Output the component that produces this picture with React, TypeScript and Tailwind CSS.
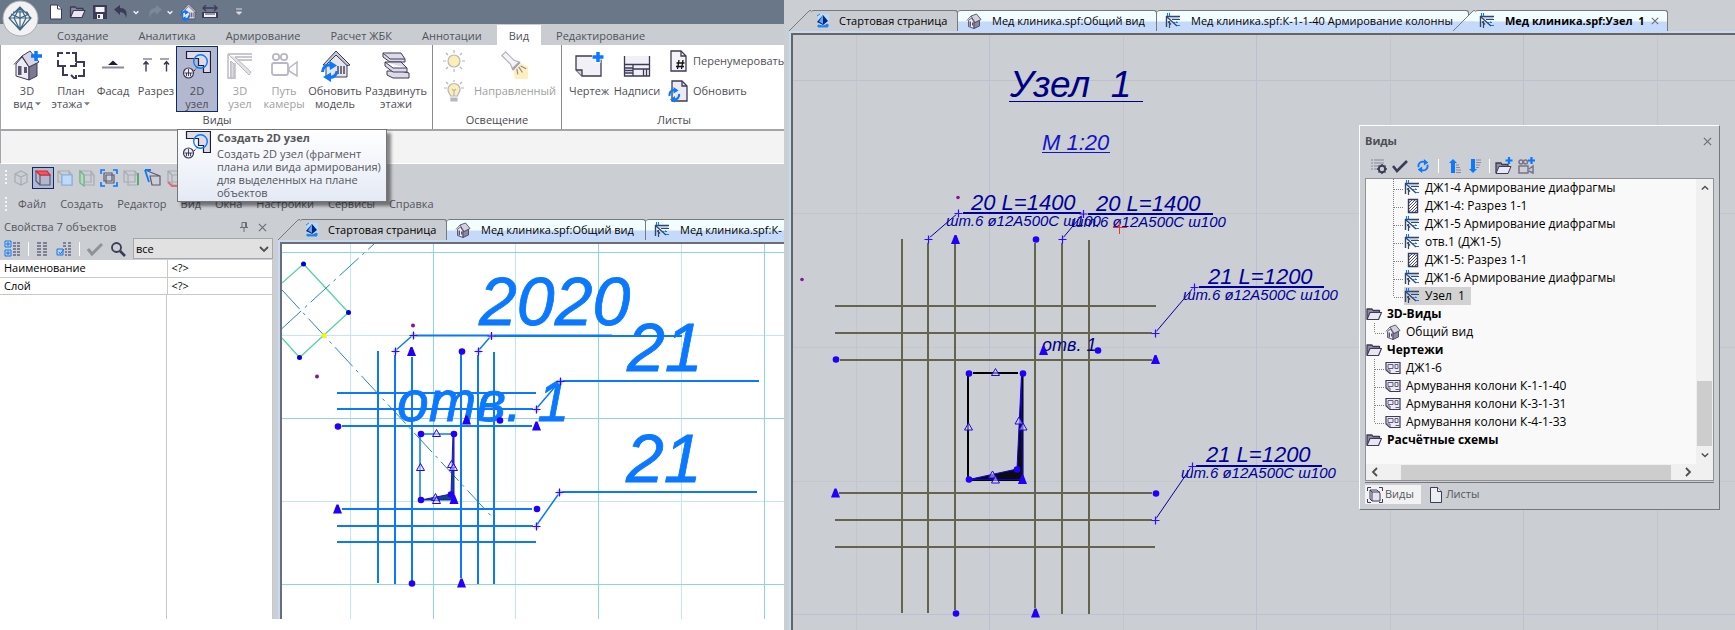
import React from "react";

type IconProps = { className?: string };

const INK = "#3d3a57";
const BLUE = "#0a78ff";

/* ---------- shared glyphs ---------- */

const CloseGlyph: React.FC<IconProps> = ({ className }) => (
  <svg viewBox="0 0 10 10" className={className} stroke="#6b6e73" strokeWidth="1.3" fill="none">
    <path d="M1 1l8 8M9 1l-8 8" />
  </svg>
);

const Chevron: React.FC<{ d: string; className?: string; stroke?: string }> = ({ d, className, stroke = "#505050" }) => (
  <svg viewBox="0 0 10 10" className={className} stroke={stroke} strokeWidth="1.8" fill="none">
    <path d={d} />
  </svg>
);

const House: React.FC<IconProps> = ({ className }) => (
  <svg viewBox="0 0 16 16" className={className} stroke={INK} strokeWidth="0.8" strokeLinejoin="round">
    <path d="M2.5 7.5v6L8 15.500V9L5.500 5z" fill="#efedf4" />
    <path d="M8 9.500l5.500-2.500v6L8 15.500z" fill="#8c889e" />
    <path d="M1 7.500L5 3l4 6.500L15 6.500 10.500 1 5 3" fill="#d4d1de" />
    <path d="M3.500 8.500h1.500v5H3.500zM6 9.500h1.300v3H6z" fill="#5a5672" stroke="none" />
  </svg>
);

const StartIcon: React.FC<IconProps> = ({ className }) => (
  <svg viewBox="0 0 16 16" className={className}>
    <path d="M3 1h11v14H3z" fill="#b9dcf8" />
    <path d="M8 2l5 6-5 4-6-3z" fill="#07248c" />
    <path d="M8 2v9L4 8.5z" fill="#5fa8f2" />
    <path d="M2 3l3-2M3 12l5 1 5-2v3H3z" fill="#2b7fe0" stroke="#2b7fe0" />
  </svg>
);

const RebarIcon: React.FC<IconProps> = ({ className }) => (
  <svg viewBox="0 0 16 16" className={className} fill="none" stroke="#33476b">
    <path d="M1 3.500h14M1.500 3v11" strokeWidth="1.400" />
    <path d="M7 6.500h8M4.500 8v7" strokeWidth="1.200" />
    <path d="M2 4l10 9M3 8.500l3 3" strokeWidth="1.300" />
    <path d="M2.500 0v3M4.500 0v3M9 9.500h4M12 12.500h3" stroke={BLUE} strokeWidth="1.100" />
    <path d="M5 5h9M10 10l2-2" stroke="#8aa6d0" />
  </svg>
);

const SectionIcon: React.FC<IconProps> = ({ className }) => (
  <svg viewBox="0 0 16 16" className={className} fill="none" stroke={INK}>
    <path d="M4.5 1.5h9v13h-9z" fill="#fff" strokeWidth="1.4" />
    <path d="M5 5l3-3M5 8l6-6M5 11l8-8M5 14l8-8M8 14l5-5M11 14l2-2" strokeWidth="0.9" />
    <path d="M6 3v1M12 3v1M6 12v1M12 12v1" stroke={BLUE} />
  </svg>
);

const FolderIcon: React.FC<IconProps> = ({ className }) => (
  <svg viewBox="0 0 16 16" className={className} stroke={INK} strokeLinejoin="round">
    <path d="M1 13V3h5l1 1.5h6.5V7" fill="#8d8a9d" strokeWidth="1.3" />
    <path d="M1 13.5L4 6.5h11.5L12.5 13.5z" fill="#e9e7f0" strokeWidth="1.1" />
  </svg>
);

const SheetIcon: React.FC<IconProps> = ({ className }) => (
  <svg viewBox="0 0 16 16" className={className} stroke={INK} fill="none">
    <path d="M1 2.5h14v11H5L1 10z" fill="#eceaf2" strokeWidth="1.2" />
    <path d="M1 10h4v3.5M3 4.5h5v4H3zM10 4.500h3v4h-3zM10.500 11.500h4" strokeWidth="1" stroke="#615e7a" />
  </svg>
);

const RefreshGlyph: React.FC<IconProps> = ({ className }) => (
  <svg viewBox="0 0 16 16" className={className} fill="none" stroke={BLUE} strokeWidth="2">
    <path d="M3 9.500A5 5 0 0 1 10 3.500M13 6.500A5 5 0 0 1 6 12.500" />
    <path d="M9 0l5 4-5 3.500zM7 16l-5-4 5-3.500z" fill={BLUE} stroke="none" />
  </svg>
);

/* ---------- ribbon icons, 28x28 ---------- */

const House3D = () => (
  <svg viewBox="0 0 28 28" className="h-7 w-7 overflow-visible" stroke={INK} strokeLinejoin="round">
    <path d="M3 13v12l13 4V16L9 6z" fill="#eceaf2" />
    <path d="M16 16l8-4v13l-8 4z" fill="#7d798f" />
    <path d="M1 13.500L9 5l7 11 10-5L17 0 9 5" fill="#d9d6e2" />
    <path d="M5 15h3.500v9H5zM11 16h3v6h-3z" fill="#5a5672" stroke="none" />
    <path d="M23 0v10M18 5h11" stroke={BLUE} strokeWidth="3.500" />
  </svg>
);

const FloorPlan = () => (
  <svg viewBox="0 0 28 28" className="h-7 w-7" fill="none" stroke={INK} strokeWidth="2">
    <path d="M1 6V2h5M9 2h4M15 2h4v9M1 9v6h8M6 15v9h5M19 11h8v5M27 18v7h-6M13 15h6v-3M14 24l3 3h2v-3" />
  </svg>
);

const Facade = () => (
  <svg viewBox="0 0 28 28" className="h-7 w-7">
    <path d="M3 16.500h22" stroke="#8b889b" strokeWidth="2" />
    <path d="M14 9.500l5 4.500H9z" fill="#1f1d33" />
  </svg>
);

const Section = () => (
  <svg viewBox="0 0 28 28" className="h-7 w-7" fill="none" stroke={INK}>
    <path d="M1 8h9M18 8h9" stroke="#8b889b" strokeWidth="1.500" />
    <path d="M4 10.500v10M24.500 10.500v10M1.500 13.500L4 10.500l2.500 3M22 13.500l2.500-3 2.500 3" strokeWidth="1.400" />
  </svg>
);

const Node2D = () => (
  <svg viewBox="0 0 28 28" className="h-7 w-7 shrink-0" fill="none" stroke="#1f1d33" strokeWidth="1.200">
    <path d="M3.500 0.500h24v21h-7v-7h-5v-7h-12z" fill="#dedceb" />
    <circle cx="17.500" cy="10.500" r="6.800" stroke={BLUE} strokeWidth="1.400" />
    <circle cx="5.500" cy="22" r="5" fill="#f0eff6" stroke={INK} />
    <path d="M1.500 22h8M5.500 18v4M3.500 22v3M5.500 22v3M7.500 22v3" strokeWidth="0.800" />
    <path d="M11 20l3-3.500" strokeDasharray="2 1.500" strokeWidth="1" />
  </svg>
);

const Node3D = () => (
  <svg viewBox="0 0 28 28" className="h-7 w-7" fill="none" stroke="#b9b7c0">
    <path d="M2 3h24M2 3v24h3V10M5 27h4V12M9 6h17M12 9h14" strokeWidth="1.400" />
    <path d="M3 4l20 20 2-3L9 6" fill="#e2e1e6" />
    <path d="M5 10l3 3v14H5z" fill="#dddce2" />
  </svg>
);

const Camera = () => (
  <svg viewBox="0 0 28 28" className="h-7 w-7" fill="none" stroke="#b9b7c6" strokeWidth="1.800">
    <circle cx="6" cy="6" r="3.200" />
    <circle cx="14" cy="6" r="3.200" />
    <rect x="2" y="12" width="16" height="12" rx="2" />
    <path d="M19 17l8-6v14l-8-5z" strokeWidth="1.500" />
  </svg>
);

const HouseRefresh: React.FC<IconProps> = ({ className }) => (
  <svg viewBox="0 0 28 28" className={className} stroke={INK} strokeLinejoin="round">
    <path d="M5 13v13h21V13L15 2z" fill="#e6e4ec" />
    <path d="M2 14L15 0l14 14-3 .5L15 4 5 14z" fill="#c9c6d4" />
    <path d="M17 15v8M20 15v8M23 15v8" stroke="#726e87" strokeWidth="2" />
    <path d="M1.500 21a7 7 0 0 1 8-7M16 20a7 7 0 0 1-7 6.500" fill="none" stroke={BLUE} strokeWidth="3" />
    <path d="M8 9.500l8 5-7 4.500zM10 31l-8-5 8-4.500z" fill={BLUE} stroke="none" />
  </svg>
);

const Floors = () => (
  <svg viewBox="0 0 28 28" className="h-7 w-7" stroke={INK} fill="#dedbe8" strokeLinejoin="round">
    <path d="M5 20h14l8 2v5H11l-6-3z" />
    <path d="M1 2h18l4 6v3H8L1 6z" />
    <path d="M1 2l7 6h15M3 11h16l6 6v4H11l-8-6zM3 11l8 6h14" />
  </svg>
);

const Sun = () => (
  <svg viewBox="0 0 22 22" className="h-[22px] w-[22px]" stroke="#b7b5c0" strokeWidth="1.200">
    <circle cx="11" cy="11" r="6" fill="#fcefb4" />
    <path d="M11 0v3M11 19v3M0 11h3M19 11h3M3 3l2 2M17 17l2 2M19 3l-2 2M3 19l2-2" />
  </svg>
);

const Bulb = () => (
  <svg viewBox="0 0 22 22" className="h-[22px] w-[22px]" stroke="#b7b5c0" strokeWidth="1.200">
    <path d="M7.500 16c0-2-2.500-3-2.500-6.500a6 6 0 0 1 12 0C17 13 14.500 14 14.500 16z" fill="#fcefb4" />
    <path d="M8 18h6v3H8z" fill="#b7b5c0" />
    <path d="M9 9l2 2 2-2M11 11v5M11 0v2M1 8h3M18 8h3M3 2l2 2M19 2l-2 2" fill="none" />
  </svg>
);

const Flashlight = () => (
  <svg viewBox="0 0 30 30" className="h-7 w-7 overflow-visible">
    <path d="M13 20l9-7 7 4v13H15z" fill="#fdf0bd" />
    <path d="M1 5l4-4 9 9 6 2-7 8-3-6z" fill="#f5f4f7" stroke="#b2b0bc" strokeWidth="1.300" />
    <path d="M20 12l-8 8" stroke="#a7a5b3" strokeWidth="2.500" />
    <path d="M17 19l1 6M19 17l4 6M21 16l6 3" stroke="#8b889b" strokeWidth="1.200" />
  </svg>
);

const SheetPlus = () => (
  <svg viewBox="0 0 28 28" className="h-7 w-7 overflow-visible" stroke={INK} strokeWidth="1.300">
    <path d="M1 5h25v20H7l-6-6z" fill="#f1f0f6" />
    <path d="M1 19h6v6" fill="#d0cddb" />
    <path d="M23 0v12M17 6h12" stroke="#fff" strokeWidth="5" />
    <path d="M23 1v10M17.500 6h11" stroke={BLUE} strokeWidth="3.500" />
  </svg>
);

const Labels = () => (
  <svg viewBox="0 0 28 28" className="h-7 w-7" stroke={INK} strokeWidth="1.300">
    <path d="M1.500 5v20h25V5" fill="#f1f0f6" />
    <path d="M1.500 13.500h25M1.500 17h8M1.500 19.500h8M1.500 22h8M10 13.500V25M10 18h16.500M20.500 18v7M23.500 18v7" />
  </svg>
);

const PageHash = () => (
  <svg viewBox="0 0 20 22" className="h-[22px] w-5 shrink-0" stroke={INK} strokeWidth="1.300" fill="none">
    <path d="M3 1h10l5 5v15H3z" fill="#f4f3f8" />
    <path d="M13 1v5h5" />
    <path d="M11 10l-1.500 9M15 10l-1.500 9M8.500 13h8M8 16.500h8" stroke="#111" />
  </svg>
);

const PageRefresh = () => (
  <svg viewBox="0 0 20 22" className="h-[22px] w-5 shrink-0 overflow-visible" stroke={INK} strokeWidth="1.300" fill="none">
    <path d="M4 1h10l5 5v15H4z" fill="#eceaf2" />
    <path d="M14 1v5h5" />
    <path d="M1.500 16a5 5 0 0 1 5-6M11 14a4.500 4.500 0 0 1-5 5.500" stroke={BLUE} strokeWidth="2.200" />
    <path d="M5.500 7l5 3.500-5 3zM7 22.500l-5-3 5-3.500z" fill={BLUE} stroke="none" />
  </svg>
);

/* ---------- ribbon ---------- */

const DropArrow = () => (
  <svg viewBox="0 0 8 5" className="mb-0.5 ml-0.5 inline h-1 w-1.5">
    <path d="M0 0h8L4 4.500z" fill="#7b7b7b" />
  </svg>
);

type RibbonItem = {
  lines: string[];
  icon: React.FC;
  width: string;
  drop?: boolean;
  active?: boolean;
  disabled?: boolean;
};

const HouseRefreshLarge = () => <HouseRefresh className="h-7 w-7 overflow-visible" />;

const viewItems: RibbonItem[] = [
  { lines: ["3D", "вид"], icon: House3D, width: "w-[50px]", drop: true },
  { lines: ["План", "этажа"], icon: FloorPlan, width: "w-[38px]", drop: true },
  { lines: ["Фасад"], icon: Facade, width: "w-[46px]" },
  { lines: ["Разрез"], icon: Section, width: "w-[40px]" },
  { lines: ["2D", "узел"], icon: Node2D, width: "w-[42px]", active: true },
  { lines: ["3D", "узел"], icon: Node3D, width: "w-[44px]", disabled: true },
  { lines: ["Путь", "камеры"], icon: Camera, width: "w-[44px]", disabled: true },
  { lines: ["Обновить", "модель"], icon: HouseRefreshLarge, width: "w-[58px]" },
  { lines: ["Раздвинуть", "этажи"], icon: Floors, width: "w-[64px]" },
];

const sheetItems: RibbonItem[] = [
  { lines: ["Чертеж"], icon: SheetPlus, width: "w-[50px]" },
  { lines: ["Надписи"], icon: Labels, width: "w-[46px]" },
];

const RibbonButton: React.FC<{ item: RibbonItem }> = ({ item }) => {
  const Icon = item.icon;
  return (
    <button
      type="button"
      className={`flex h-[66px] shrink-0 flex-col items-center border pt-1 leading-[13px] whitespace-nowrap ${item.width} ${
        item.active ? "border-[#0d2a6b] bg-[#b2b8d0]" : "border-transparent"
      } ${item.disabled ? "text-[#a0a0a0]" : "text-[#4f4f55]"}`}
    >
      <Icon />
      <span className="mt-[5px]">{item.lines[0]}</span>
      {item.lines[1] && (
        <span>
          {item.lines[1]}
          {item.drop && <DropArrow />}
        </span>
      )}
    </button>
  );
};

const RibbonGroup: React.FC<{ title: string; className?: string; children: React.ReactNode }> = ({
  title,
  className,
  children,
}) => (
  <section className={`flex shrink-0 flex-col pt-px ${className ?? ""}`}>
    <div className="flex h-[66px]">{children}</div>
    <h2 className="text-center leading-4 text-[#4a4a50]">{title}</h2>
  </section>
);

const Ribbon = () => (
  <div className="flex h-[86px] overflow-hidden border-b-2 border-l border-[#a2a4a8] bg-white">
    <RibbonGroup title="Виды" className="w-[431px] pl-px">
      {viewItems.map((item) => (
        <RibbonButton key={item.lines.join(" ")} item={item} />
      ))}
    </RibbonGroup>
    <RibbonGroup title="Освещение" className="w-[129px] border-l border-[#8b8b8b]">
      <div className="flex flex-col gap-2 pt-1 pl-2.5">
        <button type="button" aria-label="Солнце"><Sun /></button>
        <button type="button" aria-label="Лампа"><Bulb /></button>
      </div>
      <button type="button" className="flex flex-1 flex-col items-center pt-[5px] pl-1 leading-[13px] text-[#a0a0a0]">
        <Flashlight />
        <span className="mt-[5px]">Направленный</span>
      </button>
    </RibbonGroup>
    <RibbonGroup title="Листы" className="flex-1 border-l border-[#8b8b8b] pl-0.5">
      {sheetItems.map((item) => (
        <RibbonButton key={item.lines[0]} item={item} />
      ))}
      <div className="flex flex-col pl-2 text-[#4f4f55]">
        <button type="button" className="flex h-[30px] items-center gap-[5px] whitespace-nowrap">
          <PageHash /> Перенумеровать
        </button>
        <button type="button" className="flex h-[30px] items-center gap-[5px]">
          <PageRefresh /> Обновить
        </button>
      </div>
    </RibbonGroup>
  </div>
);

const TitleBar = () => (
  <header className="relative flex h-6 items-center bg-[#697789] pl-[49px]">
    <svg viewBox="0 0 38 38" className="absolute top-0 left-0.5 z-10 h-[38px] w-[38px]">
      <circle cx="18.500" cy="18.500" r="17.500" fill="#f2f2f3" stroke="#a9adb3" />
      <g fill="none" stroke="#3f6683" strokeWidth="1.200">
        <path d="M18 7L7 18l11 12 11-12zM7 18h22M18 7v23M18 7l-6 11 6 12M18 7l6 11-6 12M11 12h14l3 6" />
        <path d="M9 14l9 4 9-4" />
      </g>
    </svg>
    <button type="button" aria-label="Новый">
      <svg viewBox="0 0 14 16" className="h-4 w-3.5" fill="#fff" stroke={INK}>
        <path d="M1.500 1h7l4 4v10h-11z" />
        <path d="M8.500 1v4h4" />
      </svg>
    </button>
    <button type="button" aria-label="Открыть" className="ml-1.5"><FolderIcon className="h-4 w-[17px]" /></button>
    <button type="button" aria-label="Сохранить" className="ml-[7px]">
      <svg viewBox="0 0 14 14" className="h-3.5 w-3.5">
        <path d="M0 0h14v14H0z" fill={INK} />
        <path d="M2.500 2h9v5h-9zM4 9h6v5H4z" fill="#f4f4f7" />
        <path d="M5 10h2v3H5z" fill={INK} />
      </svg>
    </button>
    <button type="button" aria-label="Отменить" className="ml-[7px]">
      <svg viewBox="0 0 14 14" className="h-3.5 w-3.5"><path d="M0 4.500L6 0v3c5 0 8 3 6 10-.5-4-2.500-6-6-6v3z" fill={INK} /></svg>
    </button>
    <Chevron d="M2 4l3 3 3-3" stroke="#f0f1f3" className="ml-1 h-2 w-2" />
    <button type="button" aria-label="Повторить" className="ml-2">
      <svg viewBox="0 0 14 14" className="h-3.5 w-3.5"><path d="M14 4.500L8 0v3C3 3 0 6 2 13c.5-4 2.500-6 6-6v3z" fill="#7d8999" /></svg>
    </button>
    <Chevron d="M2 4l3 3 3-3" stroke="#f0f1f3" className="ml-1 h-2 w-2" />
    <button type="button" aria-label="Обновить модель" className="ml-1.5"><HouseRefresh className="h-4 w-4 overflow-visible" /></button>
    <button type="button" aria-label="Измерить" className="ml-1.5">
      <svg viewBox="0 0 16 14" className="h-3.5 w-4">
        <path d="M1 3h14M4 0L1 3l3 3M12 0l3 3-3 3" stroke={INK} strokeWidth="1.300" fill="none" />
        <path d="M0 7h16v6H0z" fill={INK} />
        <path d="M2 8h12v4H2z" fill="#f1f1f5" />
        <path d="M4 8v2M6 8v2M8 8v2M10 8v2M12 8v2" stroke={INK} />
      </svg>
    </button>
    <svg viewBox="0 0 8 8" className="ml-[17px] h-2 w-2"><path d="M1 1h6M1.500 4h5L4 6.500z" fill="#dcdcdc" stroke="#dcdcdc" /></svg>
  </header>
);

const ribbonTabs = ["Создание", "Аналитика", "Армирование", "Расчет ЖБК", "Аннотации", "Вид", "Редактирование"];

const RibbonTabs = () => (
  <nav className="flex h-[21px] items-end overflow-hidden bg-[#c9cdd2] pl-[42px] text-[#50545b]">
    {ribbonTabs.map((tab) => (
      <button
        key={tab}
        type="button"
        className={`h-5 shrink-0 pt-0.5 whitespace-nowrap ${tab === "Вид" ? "bg-white px-3" : "px-[15px]"}`}
      >
        {tab}
      </button>
    ))}
  </nav>
);

/* ---------- view cube toolbar and menu ---------- */

const Cube: React.FC<{ stroke?: string; children?: React.ReactNode }> = ({ stroke = "#a9abb3", children }) => (
  <svg viewBox="0 0 18 18" className="h-[18px] w-[18px] shrink-0" fill="none" stroke={stroke} strokeWidth="1.200">
    {children ?? <path d="M3 5l6-3 6 3v8l-6 3-6-3zM3 5l6 3 6-3M9 8v8" />}
  </svg>
);

const Grip = () => (
  <svg viewBox="0 0 4 16" className="h-4 w-1 shrink-0" stroke="#f4f5f6" strokeWidth="2">
    <path d="M2 0v16" strokeDasharray="2 2" />
  </svg>
);

const boxLines = "M2 2h11v11H2zM6 6h10v10H6zM2 2l4 4M13 2l3 4";

const CubeToolbar = () => (
  <div className="flex h-[27px] items-center gap-1 pl-1">
    <Grip />
    <Cube />
    <button type="button" aria-label="Вид сверху" className="-mx-0.5 border border-[#0d2a6b] bg-[#b2b8d0] px-px py-px">
      <Cube stroke="#5d5b75">
        <path d="M2 2v10l4 4M6 6h10v10H6zM13 2v3" />
        <path d="M2 2h11l3 4H6z" fill="#f4555f" stroke="#e0202d" />
      </Cube>
    </button>
    <Cube><path d={boxLines} /><path d="M6 6h10v10H6z" stroke="#7fb2ee" fill="#c0d9f5" /></Cube>
    <Cube><path d={boxLines} /><path d="M2 2v12l4 3V6z" stroke="#6fb58b" fill="#b7d8c4" /></Cube>
    <Cube stroke="#5d5b75"><path d="M4 4h8v8H4zM6 6h8v8H6z" /><path d="M1 5V1h4M13 1h4v4M17 13v4h-4M5 17H1v-4" stroke={BLUE} strokeWidth="1.600" /></Cube>
    <Cube><path d={boxLines} /><path d="M16 4v12" stroke="#5aa97b" strokeWidth="2" /></Cube>
    <Cube stroke="#5d5b75"><path d="M6 7h10v9H8zM6 7l2 9M1 1l15 6" /><path d="M1 1h6M1 1l4 12" stroke={BLUE} strokeWidth="1.800" /></Cube>
    <Cube><path d={boxLines} /><path d="M2 13l4 4h11" stroke="#e26a72" strokeWidth="1.800" /></Cube>
  </div>
);

const menuItems = ["Файл", "Создать", "Редактор", "Вид", "Окна", "Настройки", "Сервисы", "Справка"];

const MenuBar = () => (
  <nav className="flex h-[25px] items-center gap-3.5 pt-0.5 pl-1 text-[#54575d]">
    <div className="-mr-1"><Grip /></div>
    {menuItems.map((m) => (
      <button key={m} type="button">{m}</button>
    ))}
  </nav>
);

const Tooltip = () => (
  <div
    role="tooltip"
    className="absolute top-[129px] left-[177px] z-20 flex h-[73px] w-[210px] gap-1.5 border border-[#767676] bg-linear-to-b from-white to-[#e4eaf5] pt-px pl-[5px] text-[#55565c] shadow-[4px_4px_3px_rgba(0,0,0,0.45)]"
  >
    <Node2D />
    <div className="whitespace-nowrap">
      <p className="leading-[14px] font-bold">Создать 2D узел</p>
      <p className="mt-0.5 leading-[13px]">
        Создать 2D узел (фрагмент<br />плана или вида армирования)<br />для выделенных на плане<br />объектов
      </p>
    </div>
  </div>
);

/* ---------- properties ---------- */

const PropertiesPanel = () => (
  <aside className="flex w-[273px] shrink-0 flex-col">
    <div className="flex h-[21px] items-center pt-px pr-1.5 pl-1 text-[#54575d]">
      <h2>Свойства 7 объектов</h2>
      <button type="button" aria-label="Закрепить" className="ml-auto">
        <svg viewBox="0 0 8 10" className="h-2.5 w-2" stroke="#6b6e73" fill="none"><path d="M2 0.500h4.500v5H2zM5.500 0v6M0 5.500h8M4 6v4" /></svg>
      </button>
      <button type="button" aria-label="Закрыть" className="ml-2.5"><CloseGlyph className="h-[9px] w-[9px]" /></button>
    </div>
    <div className="flex h-[23px] items-center pl-1">
      <svg viewBox="0 0 17 17" className="h-[17px] w-[17px] shrink-0" fill="none">
        <path d="M1 1h6v6H1zM1 10h6v6H1zM2 4h4M4 2v4M2 13h4M4 11v4" stroke={BLUE} />
        <path d="M9 3h3M13 3h3M9 6h3M13 6h3M9 9h3M13 9h3M9 12h3M13 12h3M9 15h3M13 15h3" stroke="#67647f" strokeWidth="1.300" />
      </svg>
      <i className="mx-[7px] h-3.5 w-px shrink-0 bg-white" />
      <svg viewBox="0 0 12 17" className="h-[17px] w-3 shrink-0" stroke="#67647f" strokeWidth="1.300">
        <path d="M1 3h4M7 3h4M1 6h4M7 6h4M1 9h4M7 9h4M1 12h4M7 12h4M1 15h4M7 15h4" />
      </svg>
      <svg viewBox="0 0 16 17" className="ml-2 h-[17px] w-4 shrink-0" fill="none">
        <path d="M1 9h6v6H1zM3 12l1.500 2L8 9" stroke={BLUE} />
        <path d="M7 3h3M12 3h3M7 6h3M12 6h3M9 9h2M12 9h3M9 12h2M12 12h3M9 15h2M12 15h3" stroke="#67647f" strokeWidth="1.300" />
      </svg>
      <i className="mx-[7px] h-3.5 w-px shrink-0 bg-white" />
      <svg viewBox="0 0 16 14" className="h-3.5 w-4 shrink-0"><path d="M1 7l4 5L15 2" fill="none" stroke="#8f919b" strokeWidth="3" /></svg>
      <svg viewBox="0 0 16 16" className="mx-[7px] h-4 w-4 shrink-0" fill="none" stroke={INK}>
        <circle cx="6.500" cy="6.500" r="4.500" strokeWidth="1.800" /><path d="M10 10l5 5" strokeWidth="2.600" />
      </svg>
      <div className="relative flex-1">
        <select
          aria-label="Фильтр"
          className="block h-[21px] w-full appearance-none border border-[#a5a7aa] bg-[#e1e1e1] pl-0.5 text-[11px] leading-none text-black"
        >
          <option>все</option>
        </select>
        <Chevron d="M1 3l4 4 4-4" className="pointer-events-none absolute top-1.5 right-1 h-2.5 w-2.5" />
      </div>
    </div>
    <div className="flex flex-1 flex-col border-r border-[#c8c8c8] bg-white text-black">
      <table className="w-full table-fixed border-collapse">
        <tbody>
          {["Наименование", "Слой"].map((name) => (
            <tr key={name} className="h-[17px] border-b border-[#c8c8c8]">
              <td className="w-[167px] border-r border-[#c8c8c8] px-1 py-0 leading-4">{name}</td>
              <td className="px-1 py-0 leading-4">&lt;?&gt;</td>
            </tr>
          ))}
        </tbody>
      </table>
      <div className="w-[167px] flex-1 border-r border-[#c8c8c8]" />
    </div>
  </aside>
);

/* ---------- document tabs ---------- */

const DocTab: React.FC<{
  title: string;
  icon: React.FC<IconProps>;
  width: string;
  active?: boolean;
  plain?: boolean;
}> = ({ title, icon: Icon, width, active, plain }) => (
  <button
    type="button"
    className={`flex h-[21px] shrink-0 items-center overflow-hidden rounded-t-[3px] border-t border-r border-[#77797c] text-left whitespace-pre text-black ${width} ${
      plain ? "bg-[#c9cdd2]" : "bg-linear-to-b from-[#f2fdff] from-50% to-[#c5dafa] to-55%"
    } ${active ? "pl-1 font-bold" : plain ? "pl-1" : "pl-2"}`}
  >
    <Icon className="h-4 w-4 shrink-0" />
    <span className={plain ? "ml-2" : "ml-2.5"}>{title}</span>
    {active && <CloseGlyph className="mr-2 ml-auto h-2 w-2" />}
  </button>
);

const Slant: React.FC<{ fill: string; className?: string }> = ({ fill, className }) => (
  <svg viewBox="0 0 22 21" className={`h-[21px] w-[22px] shrink-0 ${className ?? ""}`}>
    <defs>
      <linearGradient id="tabFill" x1="0" y1="0" x2="0" y2="1">
        <stop offset="0.5" stopColor="#f2fdff" />
        <stop offset="0.550" stopColor="#c5dafa" />
      </linearGradient>
    </defs>
    <path d="M0 21L20 1q1-.5 2-.5V21z" fill={fill} />
    <path d="M0 21L20 1q1-.5 2-.5" fill="none" stroke="#77797c" />
  </svg>
);

/* ---------- drawing primitives ---------- */

type Pt = [number, number];

const Crosses: React.FC<{ at: Pt[] }> = ({ at }) => (
  <g stroke="#2a10f0" strokeWidth="1.200">
    {at.map(([x, y]) => (
      <g key={`${x}-${y}`}>
        <circle cx={x} cy={y} r="3" fill="#c9c4fb" stroke="none" opacity="0.7" />
        <path d={`M${x - 4} ${y}h8M${x} ${y - 4}v8`} />
      </g>
    ))}
  </g>
);

const Dots: React.FC<{ at: Pt[]; r?: number; fill?: string }> = ({ at, r = 3.3, fill = "#2000f8" }) => (
  <g fill={fill}>
    {at.map(([x, y]) => (
      <circle key={`${x}-${y}`} cx={x} cy={y} r={r} />
    ))}
  </g>
);

const Triangles: React.FC<{ at: Pt[]; open?: boolean }> = ({ at, open }) => (
  <g fill={open ? "#e8e6ff" : "#2000f8"} fillOpacity={open ? 0.5 : 1} stroke={open ? "#2000f8" : "none"}>
    {at.map(([x, y]) => (
      <path key={`${x}-${y}`} d={open ? `M${x} ${y - 4}l4 7h-8z` : `M${x - 1} ${y - 5}h2l3.500 9h-9z`} />
    ))}
  </g>
);

const lines = (xs: number[], from: number, to: number, vertical: boolean) =>
  xs.map((v) => (vertical ? `M${v} ${from}V${to}` : `M${from} ${v}H${to}`)).join("");

const PlanDrawing = () => (
  <svg className="block h-full w-full bg-white">
    <g transform="translate(-282 -244)">
      <g fill="none" strokeWidth="1">
        <path d={lines([350.5, 515.5, 681.5], 244, 640, true) + lines([335.5, 501.5], 282, 1000, false)} stroke="#c3e7ec" />
        <path d={lines([433.5, 598.5, 764.5], 244, 640, true) + lines([252.5, 418.5, 584.5], 282, 1000, false)} stroke="#8dd5df" />
        <path d="M282 283L303.500 264L348.500 312.500L299.500 357.500L282 338" stroke="#56d3a6" strokeWidth="1.300" />
        <path d="M282 328.500L374 244M282 290L493 518" stroke="#2a86b8" strokeDasharray="26 5 3 5" />
      </g>
      <g fill="none" stroke={BLUE} strokeWidth="2">
        <path d="M378 351V583M395 355V584M412 357V583M461 354V578M478 355V584M494 352V584" />
        <path d="M337 393H536M337 409H533M342 426H532M342 509H532M337 526H533M337 542H536" />
        <path d="M413 335.500H612M491 336H682M560 381H759M560 492H757" />
        <path d="M395 351L413 335M478 351L491 336M536 409L560 381M536 526L560 492" strokeWidth="1.500" />
        <path d="M420 434V500M420 434H454" strokeWidth="1.500" />
      </g>
      <path d="M453 434L451 494L421 500H454V434z" fill="#0b4a7a" stroke="#1a10e0" />
      <g fill={BLUE} stroke={BLUE} strokeWidth="0.800" className="font-['Liberation_Sans',Arial,sans-serif] italic">
        <text x="479" y="325" fontSize="68">2020</text>
        <text x="627" y="371" fontSize="68">21</text>
        <text x="626" y="482" fontSize="68">21</text>
        <text x="397" y="421" fontSize="57">отв. 1</text>
      </g>
      <Crosses at={[[395.5, 351.5], [413.5, 335.5], [478.5, 351.5], [491.5, 336], [536.5, 409.5], [560.5, 381.5], [536.5, 526.5], [559.5, 492.5]]} />
      <Dots at={[[462, 351.5], [338, 426.5], [500, 420.5], [421, 434], [454, 434], [421, 500], [451, 494.5], [537, 509], [412, 583.5]]} />
      <Dots at={[[303.5, 264], [348.5, 312.5], [299.5, 357.5]]} r={2.5} fill="#0000e0" />
      <Dots at={[[413, 325.5], [317, 376.5]]} r={2} fill="#8c1199" />
      <Dots at={[[324, 335.5]]} r={2.5} fill="#f5f500" />
      <Triangles at={[[411.5, 352], [536.5, 426.5], [466.5, 420.5], [337.5, 509.5], [454, 500], [461.5, 583.5]]} />
      <Triangles open at={[[436.5, 433.5], [420.5, 467.5], [451.5, 464.5], [453.5, 467.5], [435.5, 497.5], [436.5, 500.5]]} />
    </g>
  </svg>
);

const Callout: React.FC<{ x: number; y: number; mark: string }> = ({ x, y, mark }) => (
  <>
    <text x={x} y={y} fontSize="22">{mark}</text>
    <text x={x - 25} y={y + 16} fontSize="15">шт.6 ø12А500С ш100</text>
  </>
);

const NodeDrawing = () => (
  <svg className="block h-full w-full bg-[#cbced3]">
    <g transform="translate(-793 -35)">
      <g fill="none">
        <path d={lines([856.5, 1123.5, 1390.5, 1657.5], 35, 700, true) + lines([213.5, 347.5, 481.5], 793, 2400, false)} stroke="#c4c5cf" />
        <path d={lines([989.5, 1256.5, 1523.5], 35, 700, true) + lines([80.5, 614.5], 793, 2400, false)} stroke="#bfbfd2" />
        <g stroke="#65644f" strokeWidth="2">
          <path d="M902 239V613M928 243V613M955 244V610M1035 243V608M1062 243V614M1089 240V614" />
          <path d="M835 306H1156M835 333H1152M840 360H1152M839 493H1152M835 520H1152M835 547H1155" />
        </g>
        <path d="M968 373V480M973 373H1018M968 480H1023M1022.500 373V480" stroke="#000" strokeWidth="2" />
      </g>
      <path d="M1021.500 375L1017 469L969 479.500H1022.500z" fill="#0b0b10" stroke="#1000e8" />
      <g fill="none" stroke="#0000a0">
        <path d="M963 213H1082M1088 214H1213M1199 287H1324M1196 466H1322" strokeWidth="2" />
        <path d="M928 239L958 213M1062 239L1083 214M1155 333L1194 287M1155 520L1192 466" />
        <path d="M1009 101.500H1143" stroke="#000085" />
        <path d="M1042 152.500H1110" stroke="#1414c6" />
      </g>
      <g fill="#00009a" className="font-['Liberation_Sans',Arial,sans-serif] italic">
        <text x="1010" y="97" fontSize="37" fill="#000085" xmlSpace="preserve">Узел  1</text>
        <text x="1042" y="150" fontSize="22" fill="#1414c6">М 1:20</text>
        <Callout x={971} y={210} mark="20 L=1400" />
        <Callout x={1096} y={211} mark="20 L=1400" />
        <Callout x={1208} y={284} mark="21 L=1200" />
        <Callout x={1206} y={462} mark="21 L=1200" />
        <text x="1042" y="351" fontSize="18" fill="#000085">отв. 1</text>
      </g>
      <path d="M1113 227.500h14M1119.500 221v13" stroke="#e83030" />
      <Crosses at={[[928.5, 239.5], [958.5, 213.5], [1062.5, 239.5], [1083.5, 214], [1155.5, 333.5], [1194.5, 287.5], [1192.5, 466.5], [1155.5, 520.5]]} />
      <Dots at={[[1036, 239.5], [836, 359.5], [1098, 350.5], [969, 373.5], [1023, 373.5], [969, 479.5], [1017, 469.5], [1156, 493.5], [956, 613.5]]} />
      <Dots at={[[958, 197.5], [802, 279.5]]} r={1.8} fill="#8c1199" />
      <Triangles at={[[955.5, 240], [1043.5, 351], [1155.5, 360], [835.5, 493.5], [1022.5, 480], [1035.5, 613.5]]} />
      <Triangles open at={[[995.5, 372.5], [968.5, 427], [1019, 421], [1023, 427], [992.5, 475], [995.5, 480]]} />
    </g>
  </svg>
);

/* ---------- floating views panel ---------- */

type TreeRow = { label: string; level: number; icon: React.FC<IconProps>; last?: boolean; selected?: boolean };

const tree: TreeRow[] = [
  { label: "ДЖ1-4 Армирование диафрагмы", level: 2, icon: RebarIcon },
  { label: "ДЖ1-4: Разрез 1-1", level: 2, icon: SectionIcon },
  { label: "ДЖ1-5 Армирование диафрагмы", level: 2, icon: RebarIcon },
  { label: "отв.1 (ДЖ1-5)", level: 2, icon: RebarIcon },
  { label: "ДЖ1-5: Разрез 1-1", level: 2, icon: SectionIcon },
  { label: "ДЖ1-6 Армирование диафрагмы", level: 2, icon: RebarIcon },
  { label: "Узел  1", level: 2, icon: RebarIcon, last: true, selected: true },
  { label: "3D-Виды", level: 0, icon: FolderIcon },
  { label: "Общий вид", level: 1, icon: House, last: true },
  { label: "Чертежи", level: 0, icon: FolderIcon },
  { label: "ДЖ1-6", level: 1, icon: SheetIcon },
  { label: "Армування колони К-1-1-40", level: 1, icon: SheetIcon },
  { label: "Армування колони К-3-1-31", level: 1, icon: SheetIcon },
  { label: "Армування колони К-4-1-33", level: 1, icon: SheetIcon, last: true },
  { label: "Расчётные схемы", level: 0, icon: FolderIcon },
];

const TreeItem: React.FC<{ row: TreeRow }> = ({ row }) => {
  const Icon = row.icon;
  return (
    <li className={`flex h-[18px] items-center ${row.level === 2 ? "pl-[27px]" : row.level === 1 ? "pl-2" : ""}`}>
      {row.level > 0 && (
        <svg viewBox="0 0 11 18" className="h-[18px] w-[11px] shrink-0" stroke="#808080" strokeDasharray="1 1" fill="none">
          <path d={row.last ? "M0.5 0V10M1 10.500H11" : "M0.5 0V18M1 10.500H11"} />
        </svg>
      )}
      <span
        className={`flex h-[18px] items-center gap-[5px] whitespace-pre ${row.selected ? "bg-[#d2d2d2] pr-1.5" : ""} ${
          row.level === 0 ? "font-bold" : ""
        }`}
      >
        <Icon className="h-4 w-4 shrink-0" />
        {row.label}
      </span>
    </li>
  );
};

const ViewsPanel = () => (
  <aside className="absolute top-[90px] right-[15px] w-[361px] border border-t-white border-r-[#75777a] border-b-[#75777a] border-l-white bg-[#cbced3] px-[5px] text-black">
    <div className="flex h-[30px] items-center justify-between pr-0.5 text-[#4c4f55]">
      <h2 className="font-bold">Виды</h2>
      <button type="button" aria-label="Закрыть"><CloseGlyph className="h-[9px] w-[9px]" /></button>
    </div>
    <div className="flex h-[22px] items-center pb-0.5 pl-1.5">
      <svg viewBox="0 0 16 16" className="h-4 w-4" fill="none">
        <path d="M0 2h2M3 2h10M0 5h2M3 5h10M0 8h2M3 8h4M0 11h2M3 11h3" stroke="#8a889b" />
        <circle cx="11" cy="11" r="3.200" stroke={INK} strokeWidth="2" />
        <path d="M11 6v2M11 14v2M6 11h2M14 11h2M7.500 7.500l1 1M13.500 13.500l1 1M14.500 7.500l-1 1M7.500 14.500l1-1" stroke={INK} strokeWidth="1.400" />
      </svg>
      <svg viewBox="0 0 16 14" className="ml-[5px] h-3.5 w-4"><path d="M1 7l4 5L15 2" fill="none" stroke={INK} strokeWidth="2.600" /></svg>
      <RefreshGlyph className="ml-2 h-3.5 w-3.5" />
      <i className="mx-2 h-3.5 w-px bg-white" />
      <svg viewBox="0 0 12 14" className="ml-0.5 h-3.5 w-3"><path d="M4 0L0 4h2v10h4V4h2z" fill={BLUE} /><path d="M7 6h3M7 8.500h4M7 11h5M7 13.500h5" stroke="#8a889b" /></svg>
      <svg viewBox="0 0 12 14" className="ml-2 h-3.5 w-3"><path d="M4 14l-4-4h2V0h4v10h2z" fill={BLUE} /><path d="M7 1h5M7 3.500h5M7 6h4M7 8.500h3" stroke="#8a889b" /></svg>
      <i className="mr-[5px] ml-2 h-3.5 w-px bg-white" />
      <svg viewBox="0 0 18 18" className="h-[18px] w-[18px]" stroke={INK}>
        <path d="M1 16V6h5l1 1.500h6V10" fill="#8d8a9d" strokeWidth="1.300" /><path d="M1 16.500L4 9.500h12L13 16.500z" fill="#e9e7f0" />
        <path d="M14 0v7M10.500 3.500h7" stroke={BLUE} strokeWidth="2.200" />
      </svg>
      <svg viewBox="0 0 18 18" className="ml-1 h-[18px] w-[18px]" stroke="#77748b" fill="none" strokeWidth="1.500">
        <circle cx="4" cy="5" r="2" /><circle cx="8.500" cy="5" r="2" /><path d="M2 9h9v7H2zM12 12l4-3v7l-4-2" />
        <path d="M14.500 0v7M11 3.500h7" stroke={BLUE} strokeWidth="2.200" />
      </svg>
    </div>
    <div className="border border-[#8f9194] bg-[#f9f9f9]">
      <div className="flex">
        <ul className="h-[285px] flex-1 overflow-hidden text-[12px]">
          {tree.map((row) => (
            <TreeItem key={row.label} row={row} />
          ))}
        </ul>
        <div className="flex w-[17px] flex-col items-center bg-[#f0f0f0]">
          <Chevron d="M1 7l4-4 4 4" className="my-1 h-2.5 w-2" />
          <div className="mt-auto h-[65px] w-[15px] bg-[#cdcdcd]" />
          <Chevron d="M1 3l4 4 4-4" className="my-1 h-2.5 w-2" />
        </div>
      </div>
      <div className="flex h-4 items-center bg-[#f0f0f0] pr-5 pl-1">
        <Chevron d="M7 1L3 5l4 4" className="h-2.5 w-2.5" />
        <div className="ml-[21px] h-[15px] flex-1 bg-[#cdcdcd]" />
        <Chevron d="M3 1l4 4-4 4" className="ml-3 h-2.5 w-2.5" />
      </div>
    </div>
    <div className="mt-px flex h-[27px] items-start border-t border-[#75777a] pt-0.5 text-[#55585e]">
      <button type="button" className="flex h-[19px] items-center gap-0.5 bg-[#f2f2f2] pr-[7px] pl-0.5">
        <svg viewBox="0 0 16 16" className="h-4 w-4" fill="none" stroke={INK}>
          <path d="M3 3h7l3 3v8H5L3 12zM3 3l2 2v9M5 5h8" fill="#e6e3ef" />
          <path d="M0.500 4V0.500H4M12 .500h3.500V4M15.500 12v3.500H12M4 15.500H.500V12" />
        </svg>
        Виды
      </button>
      <button type="button" className="ml-2 flex h-[19px] items-center gap-[3px]">
        <svg viewBox="0 0 14 16" className="h-4 w-3.5" fill="#eceef2" stroke={INK}><path d="M1.500 .500h7l4 4v11h-11z" /><path d="M8.500 .500v4h4" /></svg>
        Листы
      </button>
    </div>
  </aside>
);

/* ---------- page ---------- */

export default function App() {
  return (
    <div className="grid h-screen grid-cols-[784fr_951fr] overflow-hidden bg-[#cbced3] font-['Open_Sans','Noto_Sans',sans-serif] text-[11px]">
      <div className="relative flex min-w-0 flex-col overflow-hidden bg-[#cbced3]">
        <TitleBar />
        <RibbonTabs />
        <Ribbon />
        <div className="h-[33px] border-b border-l border-b-white border-l-[#a2a4a8] bg-[#f3f3f3]" />
        <CubeToolbar />
        <MenuBar />
        <Tooltip />
        <main className="flex min-h-0 flex-1">
          <PropertiesPanel />
          <div className="flex min-w-0 flex-1 flex-col pt-[3px] pl-[5px]">
            <div className="flex overflow-hidden">
              <Slant fill="#c9cdd2" />
              <DocTab title="Стартовая страница" icon={StartIcon} width="w-[147px]" plain />
              <DocTab title="Мед клиника.spf:Общий вид" icon={House} width="w-[199px]" />
              <DocTab title="Мед клиника.spf:К-" icon={RebarIcon} width="w-[199px]" />
            </div>
            <div className="min-h-0 flex-1 border-t-2 border-l-2 border-[#c5dafa]">
              <div className="h-full border-t-2 border-l-2 border-[#6d6e70]">
                <PlanDrawing />
              </div>
            </div>
          </div>
        </main>
        <div className="h-[11px] bg-white" />
      </div>
      <div className="flex min-w-0 flex-col overflow-hidden pt-2.5 pl-[5px]">
        <div className="flex overflow-hidden">
          <Slant fill="#c9cdd2" />
          <DocTab title="Стартовая страница" icon={StartIcon} width="w-[147px]" plain />
          <DocTab title="Мед клиника.spf:Общий вид" icon={House} width="w-[199px]" />
          <DocTab title="Мед клиника.spf:К-1-1-40 Армирование колонны" icon={RebarIcon} width="w-[312px]" />
          <Slant fill="url(#tabFill)" className="-ml-4" />
          <DocTab title="Мед клиника.spf:Узел  1" icon={RebarIcon} width="w-[193px]" active />
        </div>
        <div className="min-h-0 flex-1 border-t-2 border-l-2 border-[#c5dafa]">
          <div className="relative h-full border-t-2 border-l-2 border-[#66665e]">
            <NodeDrawing />
            <ViewsPanel />
          </div>
        </div>
      </div>
    </div>
  );
}
